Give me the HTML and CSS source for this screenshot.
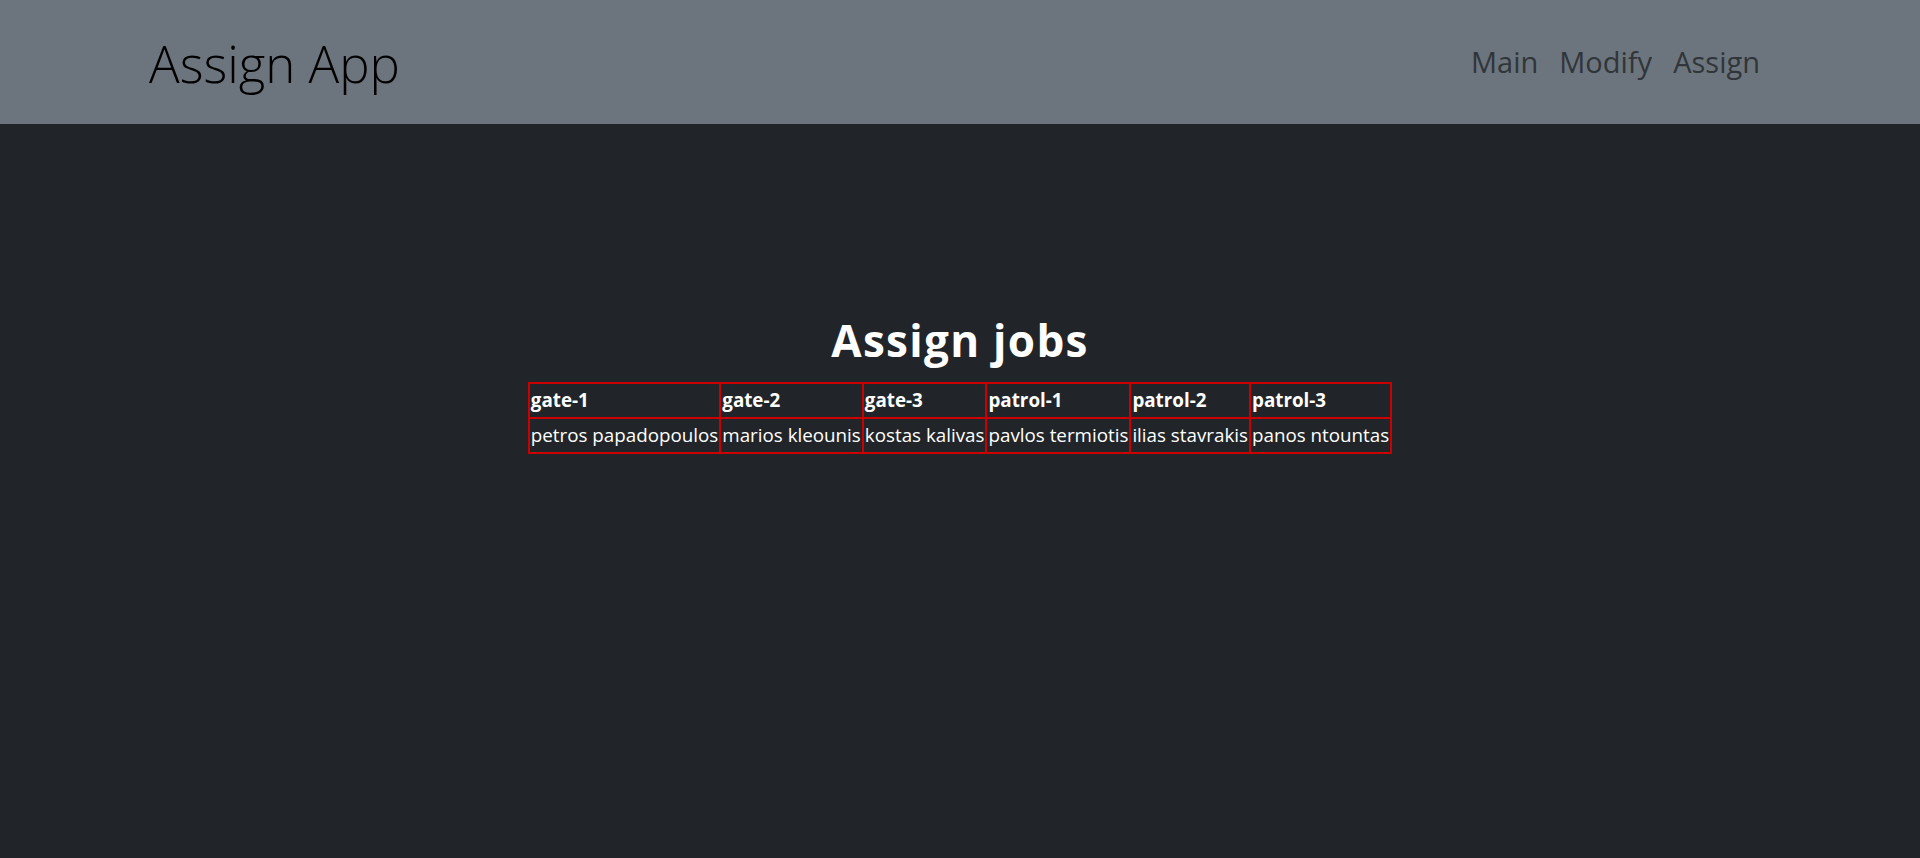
FILE: index.html
```html
<!DOCTYPE html>
<html lang="en">
<head>
<meta charset="utf-8">
<title>Assign App</title>
<link rel="stylesheet" href="styles.css">
</head>
<body>
<header class="topbar">
  <div class="brand">Assign App</div>
  <nav class="nav">
    <a class="nav-link" href="#">Main</a>
    <a class="nav-link" href="#">Modify</a>
    <a class="nav-link" href="#">Assign</a>
  </nav>
</header>
<main class="content">
  <h1 class="title">Assign jobs</h1>
  <table class="jobs">
    <thead>
      <tr>
        <th>gate-1</th><th>gate-2</th><th>gate-3</th><th>patrol-1</th><th>patrol-2</th><th>patrol-3</th>
      </tr>
    </thead>
    <tbody>
      <tr>
        <td>petros papadopoulos</td><td>marios kleounis</td><td>kostas kalivas</td><td>pavlos termiotis</td><td>ilias stavrakis</td><td>panos ntountas</td>
      </tr>
    </tbody>
  </table>
</main>
</body>
</html>
```

FILE: styles.css
```css
html, body {
  margin: 0;
  padding: 0;
}
body {
  background: #212529;
  font-family: "Open Sans", "Noto Sans", sans-serif;
  min-height: 858px;
}
.topbar {
  background: #6c757d;
  height: 124px;
  box-sizing: border-box;
  display: flex;
  align-items: center;
  justify-content: space-between;
  padding: 0 160px 0 149px;
}
.brand {
  font-size: 51px;
  font-weight: 300;
  color: #000;
  line-height: 1;
  margin-top: 2px;
}
.nav {
  display: flex;
  gap: 21px;
  margin-top: -2px;
}
.nav-link {
  font-size: 29px;
  color: #30353a;
  text-decoration: none;
  line-height: 1;
}
.content {
  display: flex;
  flex-direction: column;
  align-items: center;
  padding-top: 190px;
}
.title {
  margin: 0 0 15px;
  font-size: 44px;
  letter-spacing: 1.3px;
  font-weight: 700;
  color: #fff;
  line-height: 1.2;
}
.jobs {
  border-collapse: collapse;
  color: #fff;
  font-size: 18.8px;
}
.jobs th, .jobs td {
  border: 2px solid #cc0000;
  padding: 0 1px;
  height: 35px;
  box-sizing: border-box;
  text-align: left;
  white-space: nowrap;
}
.jobs th {
  font-weight: 700;
}
.jobs td {
  font-weight: 400;
}
```
